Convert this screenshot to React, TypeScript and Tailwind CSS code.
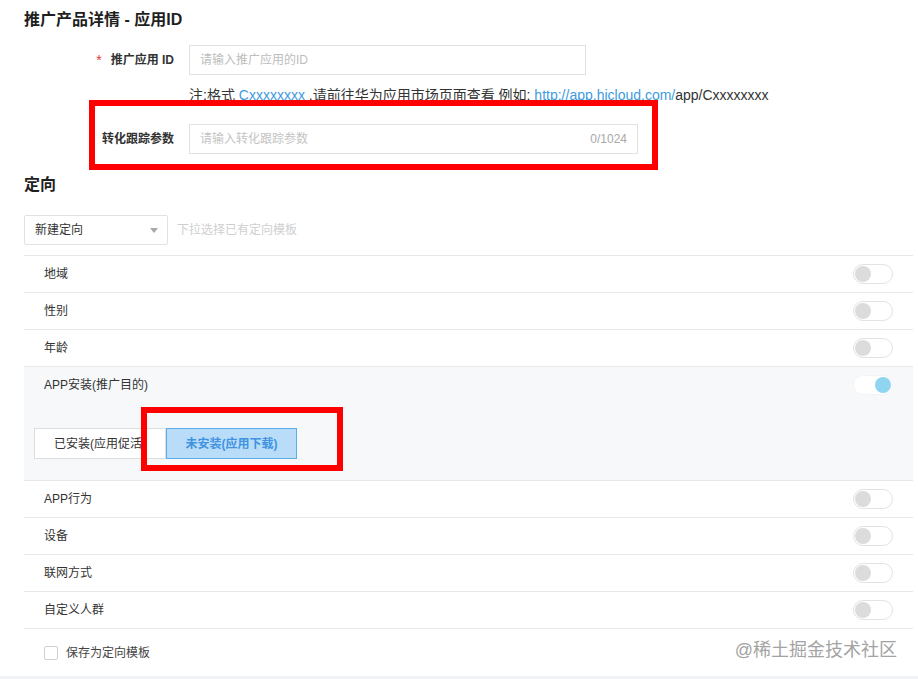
import React from "react";

const rows1 = ["地域", "性别", "年龄"];
const rows2 = ["APP行为", "设备", "联网方式", "自定义人群"];

function Toggle({ on = false }: { on?: boolean }) {
  if (on) {
    return (
      <div className="w-[40px] h-[20px] rounded-full border border-[#f3f4f6] bg-white flex items-center justify-end px-[1px]">
        <div className="w-[16px] h-[16px] rounded-full bg-[#8fd5ef]" />
      </div>
    );
  }
  return (
    <div className="w-[40px] h-[20px] rounded-full border border-[#e3e3e3] bg-white flex items-center px-[1px]">
      <div className="w-[16px] h-[16px] rounded-full bg-[#dcdcdc]" />
    </div>
  );
}

function Row({ label }: { label: string }) {
  return (
    <div className="h-[37px] border-t border-[#e8e8e8] flex items-center justify-between pl-[20px] pr-[20px]">
      <span className="text-[12px] text-[#333]">{label}</span>
      <Toggle />
    </div>
  );
}

export default function App() {
  return (
    <div
      className="relative w-[918px] h-[679px] overflow-hidden bg-white text-[#333]"
      style={{ fontFamily: '"Liberation Sans", "Noto Sans CJK SC", sans-serif' }}
    >
      <div className="pl-[24px] pr-[5px]">
        <h2 className="h-[40px] leading-[40px] text-[16px] font-bold text-[#1f1f1f]">推广产品详情 - 应用ID</h2>

        <div className="mt-[5px] flex items-center">
          <div className="w-[150px] flex justify-end items-center text-[12px] font-semibold text-[#333]">
            <span className="text-[#e4393c] mr-[9px] text-[14px] font-normal">*</span>
            推广应用 ID
          </div>
          <div className="ml-[15px] w-[397px] h-[30px] border border-[#e2e2e2] flex items-center px-[10px] text-[12px] text-[#bdbdbd]">
            请输入推广应用的ID
          </div>
        </div>

        <div className="mt-[10px] ml-[165px] h-[20px] leading-[20px] text-[14px] text-[#333] whitespace-nowrap">
          注:格式 <span className="text-[#3d9be0]">Cxxxxxxxx</span> ,请前往华为应用市场页面查看 例如: <span className="text-[#3d9be0]">http://app.hicloud.com/</span>app/Cxxxxxxxx
        </div>

        <div className="mt-[19px] flex items-center">
          <div className="w-[150px] text-right text-[12px] font-semibold text-[#333]">转化跟踪参数</div>
          <div className="ml-[15px] w-[449px] h-[30px] border border-[#e2e2e2] flex items-center justify-between px-[10px] text-[12px]">
            <span className="text-[#c4c4c4]">请输入转化跟踪参数</span>
            <span className="text-[#a8a8a8]">0/1024</span>
          </div>
        </div>

        <h2 className="mt-[16px] h-[30px] leading-[30px] text-[16px] font-bold text-[#1f1f1f]">定向</h2>

        <div className="mt-[15px] flex items-center">
          <div className="w-[144px] h-[30px] border border-[#e2e2e2] rounded-[2px] flex items-center justify-between pl-[10px] pr-[8px] text-[12px] text-[#333]">
            新建定向
            <span className="w-0 h-0 border-l-[4px] border-r-[4px] border-t-[5px] border-l-transparent border-r-transparent border-t-[#a8a8a8] mr-[1px]" />
          </div>
          <span className="ml-[9px] text-[12px] text-[#cfcfcf]">下拉选择已有定向模板</span>
        </div>

        <div className="mt-[10px]">
          {rows1.map(r => <Row key={r} label={r} />)}

          <div className="h-[114px] border-t border-[#e8e8e8] bg-[#f7f8fa]">
            <div className="h-[36px] flex items-center justify-between pl-[20px] pr-[20px]">
              <span className="text-[12px] text-[#333]">APP安装(推广目的)</span>
              <Toggle on />
            </div>
            <div className="mt-[25px] pl-[10px] flex">
              <div className="w-[132px] h-[31px] border border-[#dedede] bg-white flex items-center justify-center text-[12px] text-[#333]">
                已安装(应用促活)
              </div>
              <div className="w-[131px] h-[31px] border border-[#5aade9] bg-[#b9ddf8] flex items-center justify-center text-[12px] font-bold text-[#3f93e0]">
                未安装(应用下载)
              </div>
            </div>
          </div>

          {rows2.map(r => <Row key={r} label={r} />)}

          <div className="h-[48px] border-t border-[#e8e8e8] flex items-center pl-[20px]">
            <span className="w-[14px] h-[14px] border border-[#d0d0d0] rounded-[2px] bg-white" />
            <span className="ml-[8px] text-[12px] text-[#444]">保存为定向模板</span>
          </div>
        </div>
      </div>

      <div className="h-[3px] bg-[#f0f2f5]" />

      {/* annotation boxes */}
      <div className="absolute left-[89px] top-[100px] w-[569px] h-[70px] border-[6px] border-[#ff0000]" />
      <div className="absolute left-[141px] top-[407px] w-[202px] h-[64px] border-[6px] border-[#ff0000]" />

      <div className="absolute right-[21px] top-[638px] text-[18px] leading-[24px] text-[#a3a3a3]">@稀土掘金技术社区</div>
    </div>
  );
}
